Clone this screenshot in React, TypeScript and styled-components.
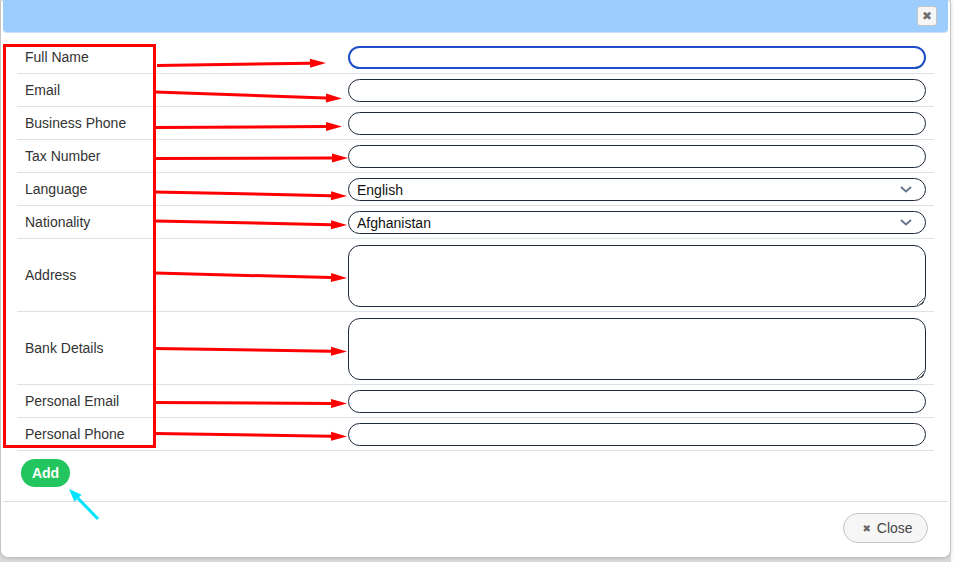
import React from "react";
import styled, { createGlobalStyle } from "styled-components";

const GlobalStyle = createGlobalStyle`
  html, body {
    margin: 0;
    padding: 0;
    background: #dadada;
    font-family: "Liberation Sans", Arial, sans-serif;
  }
  * { box-sizing: border-box; }
`;

type Field = {
  label: string;
  kind: "input" | "select" | "textarea";
  value?: string;
};

const fields: Field[] = [
  { label: "Full Name", kind: "input" },
  { label: "Email", kind: "input" },
  { label: "Business Phone", kind: "input" },
  { label: "Tax Number", kind: "input" },
  { label: "Language", kind: "select", value: "English" },
  { label: "Nationality", kind: "select", value: "Afghanistan" },
  { label: "Address", kind: "textarea" },
  { label: "Bank Details", kind: "textarea" },
  { label: "Personal Email", kind: "input" },
  { label: "Personal Phone", kind: "input" },
];

// annotation arrows: [x1, y1, x2, y2]
const redArrows: [number, number, number, number][] = [
  [157, 65.5, 326, 63],
  [155, 92, 342, 98.5],
  [155, 127.5, 342, 126.5],
  [155, 158.5, 348, 158],
  [155, 192, 347, 196],
  [155, 221, 347, 225],
  [155, 273, 347, 278],
  [155, 348.5, 347, 351.5],
  [155, 402.5, 347, 403.5],
  [155, 433.5, 347, 436.5],
];

const Page = styled.div`
  position: relative;
  width: 954px;
  height: 562px;
  overflow: hidden;
  background: linear-gradient(to right, #dadada 951px, #fafafa 951px);
`;

const Dialog = styled.div`
  width: 951px;
  height: 558px;
  display: flex;
  flex-direction: column;
  padding: 0 2px;
  background: #fff;
  border: 1px solid #c5c5c5;
  border-top: none;
  border-radius: 4px 4px 8px 8px;
  box-shadow: 0 1px 3px rgba(0, 0, 0, 0.12);
`;

const TitleBar = styled.div`
  height: 33px;
  flex: none;
  display: flex;
  align-items: center;
  justify-content: flex-end;
  padding-right: 11px;
  background: #9dcdfd;
  border-bottom: 1px solid #c9e1f8;
  border-radius: 0 0 4px 4px;
`;

const TitleClose = styled.button`
  width: 20px;
  height: 20px;
  padding: 0;
  display: flex;
  align-items: center;
  justify-content: center;
  background: #f6f6f6;
  border: 1px solid #c5c5c5;
  border-radius: 3px;
  color: #707070;
  font-family: "DejaVu Sans", sans-serif;
  font-size: 12px;
  line-height: 1;
  cursor: pointer;
`;

const Body = styled.div`
  flex: 1;
  padding: 8px 14px 0;
`;

const FormGrid = styled.div`
  display: grid;
  grid-template-columns: 323px 1fr;
`;

const LabelCell = styled.div<{ $tall?: boolean }>`
  height: ${(p) => (p.$tall ? 73 : 33)}px;
  display: flex;
  align-items: center;
  padding-left: 8px;
  border-bottom: 1px solid #dee2e6;
  color: #333;
  font-size: 14px;
`;

const FieldCell = styled.div<{ $tall?: boolean }>`
  height: ${(p) => (p.$tall ? 73 : 33)}px;
  display: flex;
  align-items: center;
  padding: 1px 8px 0;
  border-bottom: 1px solid #dee2e6;
`;

const TextInput = styled.input<{ $focused?: boolean }>`
  width: 100%;
  height: 23px;
  padding: 0 8px;
  border: ${(p) => (p.$focused ? "2px solid #1d4fc9" : "1.5px solid #1e293b")};
  border-radius: 12px;
  font-family: "Liberation Sans", Arial, sans-serif;
  font-size: 14px;
  color: #111;
  caret-color: #111;
  outline: none;
  background: #fff;
`;

const SelectWrap = styled.div`
  position: relative;
  width: 100%;
`;

const Select = styled.select`
  width: 100%;
  height: 23px;
  padding: 0 30px 0 8px;
  border: 1.5px solid #1e293b;
  border-radius: 12px;
  appearance: none;
  background: #fff;
  font-family: "Liberation Sans", Arial, sans-serif;
  font-size: 14px;
  color: #111;
  outline: none;
`;

const Chevron = styled.svg`
  position: absolute;
  right: 14px;
  top: 8px;
  pointer-events: none;
`;

const TextArea = styled.textarea`
  width: 100%;
  height: 62px;
  padding: 6px 8px;
  border: 1.5px solid #1e293b;
  border-radius: 12px;
  font-family: "Liberation Sans", Arial, sans-serif;
  font-size: 14px;
  outline: none;
`;

const AddButton = styled.button`
  margin: 8px 0 0 4px;
  width: 49px;
  height: 28px;
  border: none;
  border-radius: 14px;
  background: #22c55e;
  color: #fff;
  font-family: "Liberation Sans", Arial, sans-serif;
  font-weight: bold;
  font-size: 14px;
  cursor: pointer;
`;

const Footer = styled.div`
  flex: none;
  display: flex;
  justify-content: flex-end;
  padding: 11px 20px 14px;
  border-top: 1px solid #ddd;
`;

const CloseButton = styled.button`
  height: 30px;
  width: 85px;
  display: flex;
  align-items: center;
  justify-content: center;
  gap: 6px;
  padding: 0 0 0 4px;
  border: 1px solid #c5c5c5;
  border-radius: 15px;
  background: #f6f6f6;
  color: #454545;
  font-family: "Liberation Sans", Arial, sans-serif;
  font-size: 14px;
  cursor: pointer;
`;

const CloseGlyph = styled.span`
  font-family: "DejaVu Sans", sans-serif;
  font-size: 10px;
  color: #666;
`;

const Overlay = styled.svg`
  position: absolute;
  left: 0;
  top: 0;
  pointer-events: none;
`;

function arrowHead(x1: number, y1: number, x2: number, y2: number, len: number, half: number) {
  const dx = x2 - x1;
  const dy = y2 - y1;
  const d = Math.hypot(dx, dy);
  const ux = dx / d;
  const uy = dy / d;
  const bx = x2 - ux * len;
  const by = y2 - uy * len;
  const px = -uy * half;
  const py = ux * half;
  return {
    base: [bx, by],
    points: `${x2},${y2} ${bx + px},${by + py} ${bx - px},${by - py}`,
  };
}

const Arrow: React.FC<{ a: [number, number, number, number]; color: string; width: number; len: number; half: number }> = ({
  a,
  color,
  width,
  len,
  half,
}) => {
  const [x1, y1, x2, y2] = a;
  const head = arrowHead(x1, y1, x2, y2, len, half);
  return (
    <g>
      <line x1={x1} y1={y1} x2={head.base[0]} y2={head.base[1]} stroke={color} strokeWidth={width} />
      <polygon points={head.points} fill={color} />
    </g>
  );
};

export default function App() {
  return (
    <>
      <GlobalStyle />
      <Page>
        <Dialog>
          <TitleBar>
            <TitleClose type="button" aria-label="close">
              ✖
            </TitleClose>
          </TitleBar>
          <Body>
            <FormGrid>
              {fields.map((f, i) => {
                const tall = f.kind === "textarea";
                return (
                  <React.Fragment key={f.label}>
                    <LabelCell $tall={tall}>{f.label}</LabelCell>
                    <FieldCell $tall={tall}>
                      {f.kind === "input" && <TextInput type="text" $focused={i === 0} autoFocus={i === 0} />}
                      {f.kind === "select" && (
                        <SelectWrap>
                          <Select defaultValue={f.value}>
                            <option>{f.value}</option>
                          </Select>
                          <Chevron width="12" height="7" viewBox="0 0 12 7">
                            <path d="M1 1l5 4.5L11 1" fill="none" stroke="#64748b" strokeWidth="1.8" />
                          </Chevron>
                        </SelectWrap>
                      )}
                      {f.kind === "textarea" && <TextArea />}
                    </FieldCell>
                  </React.Fragment>
                );
              })}
            </FormGrid>
            <AddButton type="button">Add</AddButton>
          </Body>
          <Footer>
            <CloseButton type="button">
              <CloseGlyph>✖</CloseGlyph>
              Close
            </CloseButton>
          </Footer>
        </Dialog>
        <Overlay width="954" height="562" viewBox="0 0 954 562">
          <rect x="4.5" y="45.5" width="150" height="401" fill="none" stroke="#ff0000" strokeWidth="3" />
          {redArrows.map((a, i) => (
            <Arrow key={i} a={a} color="#ff0000" width={3} len={16} half={4.5} />
          ))}
          <Arrow a={[98, 519, 69, 489]} color="#00e5ff" width={3} len={13} half={5} />
        </Overlay>
      </Page>
    </>
  );
}
